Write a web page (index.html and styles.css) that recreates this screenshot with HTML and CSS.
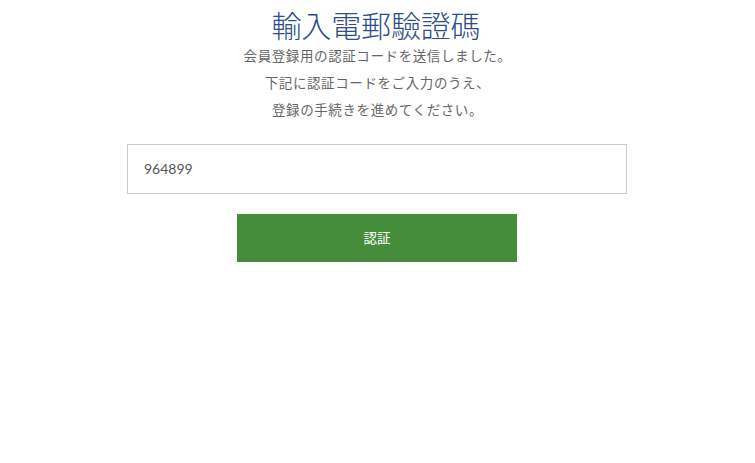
FILE: index.html
```html
<!DOCTYPE html>
<html lang="ja">
<head>
  <meta charset="utf-8">
  <title>輸入電郵驗證碼</title>
  <link rel="stylesheet" href="styles.css">
</head>
<body class="body">
<h1 class="title">輸入電郵驗證碼</h1>
<p class="lead">会員登録用の認証コードを送信しました。<br>
下記に認証コードをご入力のうえ、<br>
登録の手続きを進めてください。</p>
<form class="form">
  <input class="code" type="text" value="964899">
  <button class="submit" type="button">認証</button>
</form>
</body>
</html>
```

FILE: styles.css
```css
.body { margin:0; padding-right:1px; background:#FFFFFF; font-family:Lato,"Noto Sans CJK JP",sans-serif; color:#444444; }
.title { margin:0; padding:8px 2px 0 0; font-size:30px; line-height:34px; font-weight:300; letter-spacing:-0.15px; text-align:center; color:#2e4c8a; }
.lead { margin:0; padding:1px 0 0 1px; font-size:13.5px; line-height:27px; letter-spacing:0.6px; text-align:center; color:#666666; }
.form { display:flex; flex-direction:column; align-items:center; padding-top:20px; }
.code { box-sizing:border-box; width:500px; height:50px; padding:0 16px 2px; border:1px solid #cccccc; font-family:inherit; font-size:14px; color:#555555; }
.submit { width:280px; height:48px; margin-top:20px; padding:0 0 2px; border:0; background:#458d3a; color:#FFFFFF; font-family:inherit; font-size:13.5px; }
```
